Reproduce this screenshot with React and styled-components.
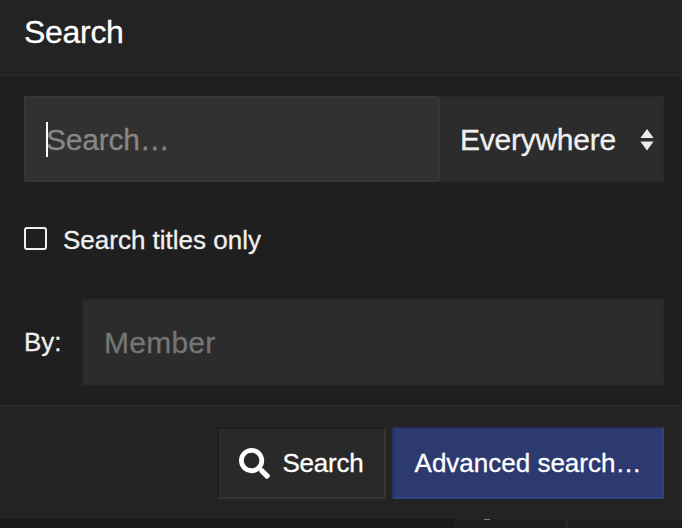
import React from "react";
import styled, { createGlobalStyle } from "styled-components";
import { FaSearch } from "react-icons/fa";

export default function App() {
  return (
    <>
      <GlobalStyle />
      <SearchMenu>
        <MenuHeader>Search</MenuHeader>
        <MenuBody>
          <InputGroup>
            <FieldWrap>
              <KeywordInput type="text" placeholder="Search…" />
              <Caret />
            </FieldWrap>
            <SelectButton type="button">
              Everywhere
              <SortIcon viewBox="0 0 14 22">
                <path d="M7 0 L13.6 9 H0.4 Z M0.4 12.4 H13.6 L7 21.4 Z" />
              </SortIcon>
            </SelectButton>
          </InputGroup>
          <TitlesLabel>
            <Checkbox />
            Search titles only
          </TitlesLabel>
          <MemberRow>
            <MemberLabel>By:</MemberLabel>
            <MemberInput type="text" placeholder="Member" />
          </MemberRow>
        </MenuBody>
        <MenuFooter>
          <Button $width={169} $spacing={-0.2}>
            <FaSearch size={31} />
            Search
          </Button>
          <Button $width={272} $primary>
            Advanced search…
          </Button>
        </MenuFooter>
      </SearchMenu>
      <PageBehind>
        <PageColumn $width={453} $color="#191919" />
        <PageColumn $width={113} $color="#1f1f1f">
          <CutGlyph />
        </PageColumn>
        <PageColumn $width={2} $color="#292929" />
        <PageColumn $width={114} $color="#1f1f1f" />
      </PageBehind>
    </>
  );
}

const GlobalStyle = createGlobalStyle`
  * {
    box-sizing: border-box;
  }
  body {
    margin: 0;
    background: #191919;
    color: #f0f0f0;
    font-family: "Liberation Sans", Arial, sans-serif;
    font-size: 26px;
    overflow: hidden;
    -webkit-text-stroke: 0.3px;
  }
  input,
  button {
    font-family: inherit;
    margin: 0;
    border-radius: 0;
    outline: 0;
    -webkit-text-stroke: 0.3px;
  }
`;

const SearchMenu = styled.div`
  width: 682px;
  height: 519px;
  background: #1f1f1f;
`;
const MenuHeader = styled.h4`
  margin: 0;
  height: 76px;
  padding: 12px 24px 0;
  background: #232323;
  border-bottom: 2px solid #282828;
  color: #fff;
  font-size: 32px;
  font-weight: 400;
  line-height: 40px;
  letter-spacing: -0.3px;
`;
const MenuBody = styled.div`
  height: 329px;
  padding: 20px 18px 20px 24px;
`;
const InputGroup = styled.div`
  display: flex;
  height: 86px;
`;
const FieldWrap = styled.div`
  position: relative;
  width: 416px;
`;
const Input = styled.input`
  height: 86px;
  padding: 2px 20px 0;
  background: #2c2c2c;
  border: 2px solid #292929;
  color: #f0f0f0;
  font-size: 30px;
  &::placeholder {
    color: #757575;
    opacity: 1;
  }
`;
const KeywordInput = styled(Input)`
  width: 100%;
  background: #313131;
  border-color: #363636;
  border-radius: 0 2px 2px 0;
  letter-spacing: -0.2px;
  &::placeholder {
    color: #868686;
  }
`;
const Caret = styled.span`
  position: absolute;
  top: 26px;
  left: 22px;
  width: 2px;
  height: 35px;
  background: #fff;
`;
const SelectButton = styled.button`
  display: flex;
  align-items: center;
  justify-content: space-between;
  width: 224px;
  padding: 2px 8px 0 20px;
  background: #2c2c2c;
  border: 2px solid #292929;
  border-left: 0;
  color: #f0f0f0;
  font-size: 30px;
  letter-spacing: -0.25px;
`;
const SortIcon = styled.svg`
  width: 14px;
  height: 22px;
  fill: #ececec;
`;
const TitlesLabel = styled.label`
  display: flex;
  align-items: center;
  gap: 16px;
  height: 36px;
  margin: 40px 0 41px;
`;
const Checkbox = styled.span`
  width: 23px;
  height: 23px;
  margin-top: -3px;
  border: 2px solid #f0f0f0;
  border-radius: 3px;
`;
const MemberRow = styled.div`
  display: flex;
  align-items: center;
`;
const MemberLabel = styled.span`
  width: 58px;
`;
const MemberInput = styled(Input)`
  flex: 1;
  min-width: 0;
  letter-spacing: 0.25px;
`;
const MenuFooter = styled.div`
  display: flex;
  justify-content: flex-end;
  gap: 6px;
  height: 114px;
  padding: 20px 18px 20px 24px;
  background: #232323;
  border-top: 2px solid #282828;
`;
const Button = styled.button`
  display: flex;
  align-items: center;
  justify-content: center;
  gap: 12px;
  width: ${({ $width }) => $width}px;
  height: 72px;
  padding: 0;
  background: ${({ $primary }) => ($primary ? "#2c3a70" : "#292929")};
  border: 2px solid;
  border-color: ${({ $primary }) =>
    $primary
      ? "#25305e #30437e #30437e #25305e"
      : "#1d1d1d #353535 #353535 #1d1d1d"};
  color: #fff;
  font-size: 26px;
  letter-spacing: ${({ $spacing = 0 }) => $spacing}px;
`;
const PageBehind = styled.div`
  display: flex;
  height: 9px;
`;
const PageColumn = styled.div`
  width: ${({ $width }) => $width}px;
  background: ${({ $color }) => $color};
`;
const CutGlyph = styled.div`
  width: 6px;
  height: 1px;
  margin-left: 31px;
  background: #777;
`;
